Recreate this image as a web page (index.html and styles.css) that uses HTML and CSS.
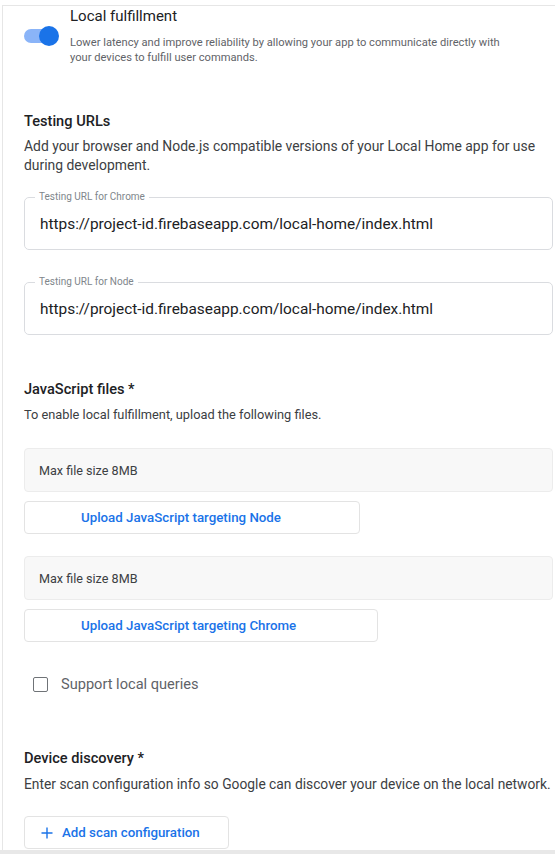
FILE: index.html
```html
<!DOCTYPE html>
<html>
<head>
<meta charset="utf-8">
<link rel="stylesheet" href="styles.css">
</head>
<body>
<div class="frame">
  <div class="content">
    <div class="toggle-row">
      <div class="toggle"><span class="track"></span><span class="knob"></span></div>
      <div class="toggle-text">
        <div class="toggle-title">Local fulfillment</div>
        <div class="toggle-desc">Lower latency and improve reliability by allowing your app to communicate directly with your devices to fulfill user commands.</div>
      </div>
    </div>

    <section class="section urls">
      <h2 class="heading">Testing URLs</h2>
      <p class="desc">Add your browser and Node.js compatible versions of your Local Home app for use during development.</p>
      <fieldset class="field">
        <legend>Testing URL for Chrome</legend>
        <div class="value">https://project-id.firebaseapp.com/local-home/index.html</div>
      </fieldset>
      <fieldset class="field">
        <legend>Testing URL for Node</legend>
        <div class="value">https://project-id.firebaseapp.com/local-home/index.html</div>
      </fieldset>
    </section>

    <section class="section js">
      <h2 class="heading">JavaScript files *</h2>
      <p class="desc small">To enable local fulfillment, upload the following files.</p>
      <div class="upload">
        <div class="filebox">Max file size 8MB</div>
        <button class="btn btn-upload btn-node">Upload JavaScript targeting Node</button>
      </div>
      <div class="upload">
        <div class="filebox">Max file size 8MB</div>
        <button class="btn btn-upload btn-chrome">Upload JavaScript targeting Chrome</button>
      </div>
      <label class="check-row"><span class="checkbox"></span><span class="check-label">Support local queries</span></label>
    </section>

    <section class="section discovery">
      <h2 class="heading">Device discovery *</h2>
      <p class="desc">Enter scan configuration info so Google can discover your device on the local network.</p>
      <button class="btn btn-add"><svg class="plus" width="12" height="12" viewBox="0 0 12 12"><path d="M6 0.5V11.5M0.5 6H11.5" stroke="#1a73e8" stroke-width="1.4" fill="none"/></svg>Add scan configuration</button>
    </section>
  </div>
</div>
<div class="bottom-bar"></div>
</body>
</html>
```
FILE: styles.css
```css
html, body {
  margin: 0;
  padding: 0;
  background: #fff;
  font-family: Roboto, "Liberation Sans", Arial, sans-serif;
  color: #3c4043;
}
body {
  width: 555px;
  height: 854px;
  overflow: hidden;
  display: flex;
  flex-direction: column;
}
.frame {
  margin: 5px 0 0 2px;
  border-top: 1px solid #e6e6e6;
  border-left: 1px solid #e6e6e6;
  flex: 1;
  overflow: hidden;
}
.content {
  padding: 0 2px 0 21px;
}
.bottom-bar {
  height: 4px;
  background: #e8e8e8;
  flex: none;
}

/* toggle */
.toggle-row {
  display: flex;
  align-items: flex-start;
}
.toggle {
  position: relative;
  width: 32px;
  height: 20px;
  margin: 20px 0 0 0;
  flex: none;
}
.track {
  position: absolute;
  left: 0;
  top: 3px;
  width: 30px;
  height: 14px;
  border-radius: 7px;
  background: #8ab4f8;
}
.knob {
  position: absolute;
  left: 15px;
  top: 0;
  width: 20px;
  height: 20px;
  border-radius: 50%;
  background: #1a73e8;
}
.toggle-text {
  margin-left: 14px;
  padding-top: 1px;
}
.toggle-title {
  font-size: 15px;
  line-height: 18px;
  color: #202124;
}
.toggle-desc {
  margin-top: 10px;
  font-size: 11.15px;
  line-height: 15px;
  color: #5f6368;
  width: 445px;
}

/* sections */
.heading {
  margin: 0;
  font-size: 14.6px;
  line-height: 20px;
  font-weight: 500;
  color: #202124;
}
.desc {
  margin: 6px 0 0;
  font-size: 13.9px;
  line-height: 19px;
  color: #3c4043;
}
.desc.small {
  font-size: 12.8px;
  margin-top: 6px;
}
.urls {
  margin-top: 46px;
}
.field {
  margin: 16px 0 0;
  padding: 0 15px 15px;
  border: 1px solid #dadce0;
  border-radius: 5px;
  min-width: 0;
}
.field + .field {
  margin-top: 26px;
}
.field legend {
  padding: 0 4px;
  margin-left: -5px;
  font-size: 10px;
  line-height: 12px;
  color: #80868b;
}
.value {
  padding-top: 11px;
  font-size: 15.4px;
  line-height: 20px;
  color: #202124;
}

.js {
  margin-top: 44px;
}
.upload {
  margin-top: 22px;
}
.js .upload:first-of-type {
  margin-top: 24px;
}
.filebox {
  height: 44px;
  box-sizing: border-box;
  padding: 0 14px;
  display: flex;
  align-items: center;
  background: #f8f8f8;
  border: 1px solid #ececec;
  border-radius: 4px;
  font-size: 12.6px;
  color: #3c4043;
}
.btn {
  display: flex;
  align-items: center;
  justify-content: flex-start;
  margin-top: 9px;
  height: 33px;
  box-sizing: border-box;
  background: #fff;
  border: 1px solid #e3e3e3;
  border-radius: 4px;
  font-family: inherit;
  font-size: 13.3px;
  font-weight: 500;
  color: #1a73e8;
  padding: 0;
}
.btn-upload {
  padding-left: 56px;
}
.btn-node {
  width: 336px;
}
.btn-chrome {
  width: 354px;
}
.check-row {
  display: flex;
  align-items: center;
  margin-top: 32px;
  padding-left: 9px;
}
.checkbox {
  width: 13px;
  height: 13px;
  border: 1.5px solid #6f7377;
  border-radius: 2px;
  flex: none;
}
.check-label {
  margin-left: 13px;
  font-size: 14.6px;
  line-height: 20px;
  color: #5f6368;
}

.discovery {
  margin-top: 54px;
}
.discovery .desc {
  font-size: 13.8px;
  margin-top: 7px;
}
.btn-add {
  width: 205px;
  margin-top: 22px;
  padding-left: 16px;
}
.plus {
  margin-right: 9px;
}
```
